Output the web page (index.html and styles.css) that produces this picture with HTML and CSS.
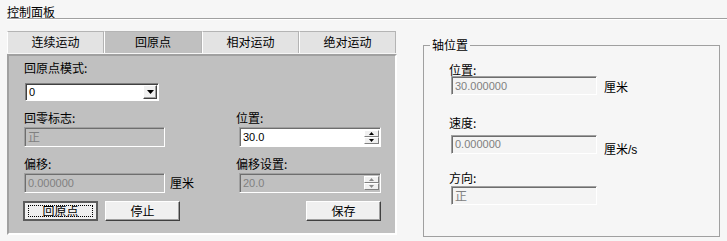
FILE: index.html
```html
<!DOCTYPE html>
<html>

<head>
	<meta charset="UTF-8">
	<title>控制面板</title>
	<link rel="stylesheet" href="styles.css">
</head>

<body>
	<div class="header">控制面板</div>
	<div class="main">
		<div class="tabBox">
			<div class="tabs">
				<div class="tab">连续运动</div>
				<div class="tab selected">回原点</div>
				<div class="tab">相对运动</div>
				<div class="tab">绝对运动</div>
			</div>
			<div class="panel">
				<div class="label">回原点模式:</div>
				<div class="combo">
					<span class="value">0</span>
					<span class="dropBtn"><svg width="7" height="4" viewBox="0 0 7 4"><polygon points="0,0 7,0 3.5,4" fill="#000"/></svg></span>
				</div>
				<div class="grid">
					<div class="cell">
						<div class="label">回零标志:</div>
						<div class="textbox disabled">正</div>
					</div>
					<div class="cell rightCell">
						<div class="label">位置:</div>
						<div class="spin">
							<span class="value">30.0</span>
							<span class="spinBtns">
								<span class="spinBtn"><svg width="5" height="3" viewBox="0 0 5 3"><polygon points="2.5,0 5,3 0,3" fill="#000"/></svg></span>
								<span class="spinBtn"><svg width="5" height="3" viewBox="0 0 5 3"><polygon points="0,0 5,0 2.5,3" fill="#000"/></svg></span>
							</span>
						</div>
					</div>
					<div class="cell">
						<div class="label">偏移:</div>
						<div class="withUnit">
							<div class="textbox disabled num">0.000000</div>
							<span class="unit">厘米</span>
						</div>
					</div>
					<div class="cell rightCell">
						<div class="label">偏移设置:</div>
						<div class="spin disabled">
							<span class="value">20.0</span>
							<span class="spinBtns">
								<span class="spinBtn"><svg width="5" height="3" viewBox="0 0 5 3"><polygon points="2.5,0 5,3 0,3" fill="#8a8a8a"/></svg></span>
								<span class="spinBtn"><svg width="5" height="3" viewBox="0 0 5 3"><polygon points="0,0 5,0 2.5,3" fill="#8a8a8a"/></svg></span>
							</span>
						</div>
					</div>
				</div>
				<div class="buttons">
					<a class="btn default"><span class="focus">回原点</span></a>
					<a class="btn">停止</a>
					<a class="btn save">保存</a>
				</div>
			</div>
		</div>
		<fieldset class="group">
			<legend>轴位置</legend>
			<div class="groupBody">
				<div class="label">位置:</div>
				<div class="withUnit">
					<div class="textbox readonly num">30.000000</div>
					<span class="unit">厘米</span>
				</div>
				<div class="label speedLabel">速度:</div>
				<div class="withUnit speedRow">
					<div class="textbox readonly num">0.000000</div>
					<span class="unit lowUnit">厘米<span class="latin">/s</span></span>
				</div>
				<div class="label dirLabel">方向:</div>
				<div class="textbox readonly dirBox">正</div>
			</div>
		</fieldset>
	</div>
</body>

</html>
```

FILE: styles.css
```css
body {
	margin: 0;
	background: #f6f6f6;
	font-family: "Noto Sans CJK SC", sans-serif;
	font-size: 12px;
	line-height: 12px;
	color: #000;
}
.header {
	margin-left: 7px;
	padding-top: 5px;
	line-height: 13px;
	border-bottom: 1px solid #a0a0a0;
	box-shadow: 0 1px 0 #fff;
}
.main {
	display: flex;
	align-items: flex-start;
	margin: 12px 0 0 7px;
}
.tabBox {
	width: 390px;
}
.tabs {
	display: flex;
}
.tab {
	box-sizing: border-box;
	width: 97px;
	height: 22px;
	border: 1px solid #b4b4b4;
	border-left-color: #fff;
	border-bottom: none;
	background: #e3e3e3;
	text-align: center;
	line-height: 20px;
}
.tab.selected {
	width: 98px;
	background: #c0c0c0;
}
.panel {
	margin-top: 1px;
	border: 2px solid;
	border-color: #a0a0a0 #fff #fff #a0a0a0;
	background: #c0c0c0;
	padding: 6px 14px 12px 15px;
}
.label {
	height: 12px;
}
.num, .value {
	font-family: "Liberation Sans", Arial, sans-serif;
	font-size: 11px;
}
.combo {
	box-sizing: border-box;
	display: flex;
	align-items: center;
	width: 134px;
	height: 18px;
	margin: 9px 0 0 1px;
	background: #fff;
	border: 1px solid;
	border-color: #808080 #fff #fff #808080;
	box-shadow: inset 1px 1px 0 #404040;
}
.combo .value {
	flex: 1;
	padding-left: 3px;
}
.dropBtn {
	box-sizing: border-box;
	display: flex;
	align-items: center;
	justify-content: center;
	width: 14px;
	height: 14px;
	margin-right: 1px;
	background: #f0f0f0;
	border: 1px solid;
	border-color: #fff #404040 #404040 #fff;
	box-shadow: inset -1px -1px 0 #a0a0a0;
}
.grid {
	display: grid;
	grid-template-columns: 212px 1fr;
	row-gap: 11px;
	margin-top: 11px;
}
.textbox {
	box-sizing: border-box;
	display: flex;
	align-items: center;
	width: 141px;
	height: 20px;
	margin-top: 3px;
	padding-left: 3px;
	border: 1px solid;
	border-color: #a0a0a0 #fff #fff #a0a0a0;
	box-shadow: inset 1px 1px 0 #6e6e6e;
}
.textbox.disabled {
	background: #c0c0c0;
	color: #808080;
}
.withUnit {
	display: flex;
	align-items: center;
}
.unit {
	margin: 3px 0 0 5px;
}
.rightCell .spin {
	margin-left: 3px;
}
.spin {
	box-sizing: border-box;
	display: flex;
	align-items: center;
	width: 142px;
	height: 20px;
	margin-top: 3px;
	background: #fff;
	border: 1px solid;
	border-color: #a0a0a0 #fff #fff #a0a0a0;
	box-shadow: inset 1px 1px 0 #6e6e6e;
}
.spin .value {
	flex: 1;
	padding-left: 3px;
}
.spin.disabled {
	background: #c0c0c0;
	color: #808080;
}
.spinBtns {
	display: flex;
	flex-direction: column;
	align-self: stretch;
	width: 15px;
	margin: 2px 1px 2px 0;
}
.spinBtn {
	box-sizing: border-box;
	flex: 1;
	display: flex;
	align-items: center;
	justify-content: center;
	background: #f0f0f0;
	border: 1px solid;
	border-color: #fff #808080 #808080 #fff;
}
.buttons {
	display: flex;
	gap: 7px;
	margin: 8px 0 0 -1px;
}
.btn {
	box-sizing: border-box;
	display: flex;
	align-items: center;
	justify-content: center;
	width: 75px;
	height: 20px;
	background: #f0f0f0;
	border: 1px solid;
	border-color: #fff #404040 #404040 #fff;
	box-shadow: inset -1px -1px 0 #a0a0a0;
	cursor: pointer;
}
.btn.default {
	border: 2px solid #5c5c5c;
	box-shadow: none;
}
.btn .focus {
	box-sizing: border-box;
	display: flex;
	align-items: center;
	justify-content: center;
	width: 65px;
	height: 12px;
	border: 1px dotted #000;
}
.btn.save {
	margin-left: auto;
}
.group {
	box-sizing: border-box;
	width: 297px;
	margin: 8px 0 0 26px;
	padding: 0 0 31px 6px;
	border: 1px solid #a0a0a0;
}
.group legend {
	padding: 0 2px;
	line-height: 12px;
}
.groupBody {
	padding: 13px 0 0 19px;
}
.group .textbox {
	width: 146px;
	height: 19px;
	margin: 0 0 0 2px;
}
.textbox.readonly {
	background: #f4f4f4;
	color: #808080;
}
.group .unit {
	margin: 3px 0 0 7px;
}
.speedLabel {
	margin-top: 22px;
}
.speedRow .textbox {
	margin-top: 3px;
}
.group .lowUnit {
	margin-top: 14px;
}
.latin {
	font-family: "Liberation Sans", Arial, sans-serif;
}
.dirLabel {
	margin-top: 16px;
}
.group .dirBox {
	margin-top: 2px;
}
```
